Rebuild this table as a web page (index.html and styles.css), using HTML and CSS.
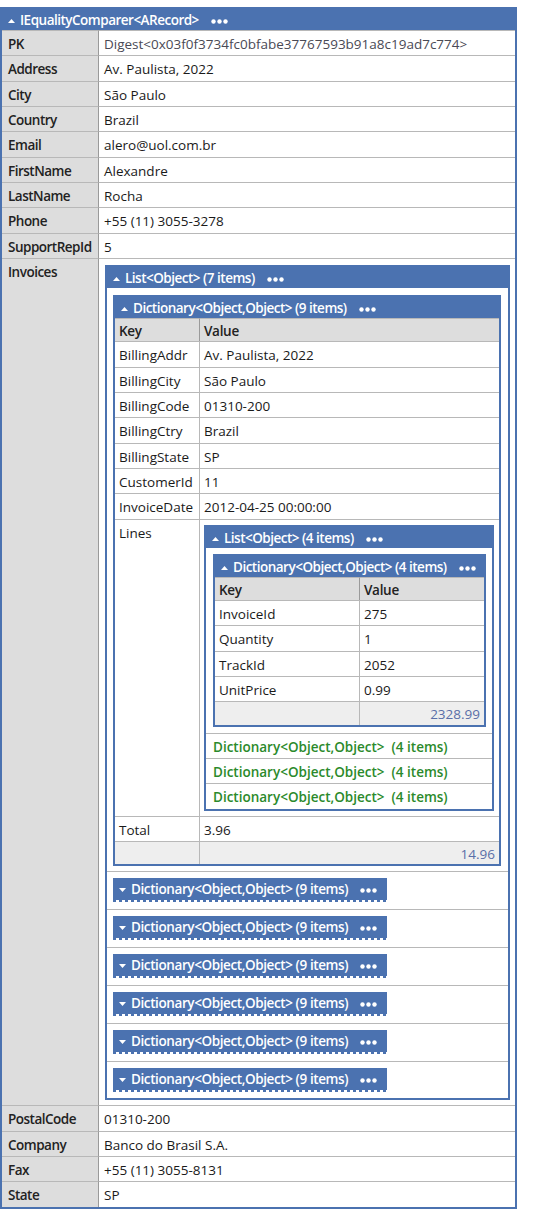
FILE: index.html
```html
<!DOCTYPE html>
<html>
<head>
<meta charset="utf-8">
<link rel="stylesheet" href="styles.css">
</head>
<body>
<div class="page">
<table class="obj outer">
  <colgroup><col class="c-outer-key"><col></colgroup>
  <thead>
    <tr><th colspan="2" class="hdr"><svg class="tri" viewBox="0 0 7 4"><polygon points="0,4 3.5,0 7,4"/></svg>IEqualityComparer&lt;ARecord&gt;<svg class="dots" viewBox="0 0 17 5"><circle cx="2.5" cy="2.5" r="2.2"/><circle cx="8.5" cy="2.5" r="2.2"/><circle cx="14.5" cy="2.5" r="2.2"/></svg></th></tr>
  </thead>
  <tbody>
    <tr><th class="k">PK</th><td class="v digest">Digest&lt;0x03f0f3734fc0bfabe37767593b91a8c19ad7c774&gt;</td></tr>
    <tr><th class="k">Address</th><td class="v">Av. Paulista, 2022</td></tr>
    <tr><th class="k">City</th><td class="v">São Paulo</td></tr>
    <tr><th class="k">Country</th><td class="v">Brazil</td></tr>
    <tr><th class="k">Email</th><td class="v">alero@uol.com.br</td></tr>
    <tr><th class="k">FirstName</th><td class="v">Alexandre</td></tr>
    <tr><th class="k">LastName</th><td class="v">Rocha</td></tr>
    <tr><th class="k">Phone</th><td class="v">+55 (11) 3055-3278</td></tr>
    <tr><th class="k">SupportRepId</th><td class="v">5</td></tr>
    <tr><th class="k">Invoices</th><td class="v nest-invoices">
      <table class="obj list7">
        <thead>
          <tr><th class="hdr"><svg class="tri" viewBox="0 0 7 4"><polygon points="0,4 3.5,0 7,4"/></svg>List&lt;Object&gt; (7 items)<svg class="dots" viewBox="0 0 17 5"><circle cx="2.5" cy="2.5" r="2.2"/><circle cx="8.5" cy="2.5" r="2.2"/><circle cx="14.5" cy="2.5" r="2.2"/></svg></th></tr>
        </thead>
        <tbody>
          <tr><td class="item first">
            <table class="obj dict9">
              <colgroup><col class="c-dict9-key"><col></colgroup>
              <thead>
                <tr><th colspan="2" class="hdr"><svg class="tri" viewBox="0 0 7 4"><polygon points="0,4 3.5,0 7,4"/></svg>Dictionary&lt;Object,Object&gt; (9 items)<svg class="dots" viewBox="0 0 17 5"><circle cx="2.5" cy="2.5" r="2.2"/><circle cx="8.5" cy="2.5" r="2.2"/><circle cx="14.5" cy="2.5" r="2.2"/></svg></th></tr>
                <tr><th class="colh ck">Key</th><th class="colh">Value</th></tr>
              </thead>
              <tbody>
                <tr><td class="dk">BillingAddr</td><td class="dv">Av. Paulista, 2022</td></tr>
                <tr><td class="dk">BillingCity</td><td class="dv">São Paulo</td></tr>
                <tr><td class="dk">BillingCode</td><td class="dv">01310-200</td></tr>
                <tr><td class="dk">BillingCtry</td><td class="dv">Brazil</td></tr>
                <tr><td class="dk">BillingState</td><td class="dv">SP</td></tr>
                <tr><td class="dk">CustomerId</td><td class="dv">11</td></tr>
                <tr><td class="dk">InvoiceDate</td><td class="dv">2012-04-25 00:00:00</td></tr>
                <tr><td class="dk">Lines</td><td class="dv nest-lines">
                  <table class="obj list4">
                    <thead>
                      <tr><th class="hdr"><svg class="tri" viewBox="0 0 7 4"><polygon points="0,4 3.5,0 7,4"/></svg>List&lt;Object&gt; (4 items)<svg class="dots" viewBox="0 0 17 5"><circle cx="2.5" cy="2.5" r="2.2"/><circle cx="8.5" cy="2.5" r="2.2"/><circle cx="14.5" cy="2.5" r="2.2"/></svg></th></tr>
                    </thead>
                    <tbody>
                      <tr><td class="item4 first">
                        <table class="obj dict4">
                          <colgroup><col class="c-dict4-key"><col></colgroup>
                          <thead>
                            <tr><th colspan="2" class="hdr"><svg class="tri" viewBox="0 0 7 4"><polygon points="0,4 3.5,0 7,4"/></svg>Dictionary&lt;Object,Object&gt; (4 items)<svg class="dots" viewBox="0 0 17 5"><circle cx="2.5" cy="2.5" r="2.2"/><circle cx="8.5" cy="2.5" r="2.2"/><circle cx="14.5" cy="2.5" r="2.2"/></svg></th></tr>
                            <tr><th class="colh ck">Key</th><th class="colh">Value</th></tr>
                          </thead>
                          <tbody>
                            <tr><td class="dk">InvoiceId</td><td class="dv">275</td></tr>
                            <tr><td class="dk">Quantity</td><td class="dv">1</td></tr>
                            <tr><td class="dk">TrackId</td><td class="dv">2052</td></tr>
                            <tr><td class="dk">UnitPrice</td><td class="dv">0.99</td></tr>
                            <tr><td class="sum ck"></td><td class="sum num">2328.99</td></tr>
                          </tbody>
                        </table>
                      </td></tr>
                      <tr><td class="green">Dictionary&lt;Object,Object&gt;&nbsp; (4 items)</td></tr>
                      <tr><td class="green">Dictionary&lt;Object,Object&gt;&nbsp; (4 items)</td></tr>
                      <tr><td class="green">Dictionary&lt;Object,Object&gt;&nbsp; (4 items)</td></tr>
                    </tbody>
                  </table>
                </td></tr>
                <tr><td class="dk">Total</td><td class="dv">3.96</td></tr>
                <tr><td class="sum ck"></td><td class="sum num">14.96</td></tr>
              </tbody>
            </table>
          </td></tr>
          <tr><td class="item"><div class="coll"><svg class="tri" viewBox="0 0 7 4"><polygon points="0,0 3.5,4 7,0"/></svg>Dictionary&lt;Object,Object&gt; (9 items)<svg class="dots" viewBox="0 0 17 5"><circle cx="2.5" cy="2.5" r="2.2"/><circle cx="8.5" cy="2.5" r="2.2"/><circle cx="14.5" cy="2.5" r="2.2"/></svg></div></td></tr>
          <tr><td class="item"><div class="coll"><svg class="tri" viewBox="0 0 7 4"><polygon points="0,0 3.5,4 7,0"/></svg>Dictionary&lt;Object,Object&gt; (9 items)<svg class="dots" viewBox="0 0 17 5"><circle cx="2.5" cy="2.5" r="2.2"/><circle cx="8.5" cy="2.5" r="2.2"/><circle cx="14.5" cy="2.5" r="2.2"/></svg></div></td></tr>
          <tr><td class="item"><div class="coll"><svg class="tri" viewBox="0 0 7 4"><polygon points="0,0 3.5,4 7,0"/></svg>Dictionary&lt;Object,Object&gt; (9 items)<svg class="dots" viewBox="0 0 17 5"><circle cx="2.5" cy="2.5" r="2.2"/><circle cx="8.5" cy="2.5" r="2.2"/><circle cx="14.5" cy="2.5" r="2.2"/></svg></div></td></tr>
          <tr><td class="item"><div class="coll"><svg class="tri" viewBox="0 0 7 4"><polygon points="0,0 3.5,4 7,0"/></svg>Dictionary&lt;Object,Object&gt; (9 items)<svg class="dots" viewBox="0 0 17 5"><circle cx="2.5" cy="2.5" r="2.2"/><circle cx="8.5" cy="2.5" r="2.2"/><circle cx="14.5" cy="2.5" r="2.2"/></svg></div></td></tr>
          <tr><td class="item"><div class="coll"><svg class="tri" viewBox="0 0 7 4"><polygon points="0,0 3.5,4 7,0"/></svg>Dictionary&lt;Object,Object&gt; (9 items)<svg class="dots" viewBox="0 0 17 5"><circle cx="2.5" cy="2.5" r="2.2"/><circle cx="8.5" cy="2.5" r="2.2"/><circle cx="14.5" cy="2.5" r="2.2"/></svg></div></td></tr>
          <tr><td class="item last"><div class="coll"><svg class="tri" viewBox="0 0 7 4"><polygon points="0,0 3.5,4 7,0"/></svg>Dictionary&lt;Object,Object&gt; (9 items)<svg class="dots" viewBox="0 0 17 5"><circle cx="2.5" cy="2.5" r="2.2"/><circle cx="8.5" cy="2.5" r="2.2"/><circle cx="14.5" cy="2.5" r="2.2"/></svg></div></td></tr>
        </tbody>
      </table>
    </td></tr>
    <tr><th class="k">PostalCode</th><td class="v">01310-200</td></tr>
    <tr><th class="k">Company</th><td class="v">Banco do Brasil S.A.</td></tr>
    <tr><th class="k">Fax</th><td class="v">+55 (11) 3055-8131</td></tr>
    <tr><th class="k">State</th><td class="v">SP</td></tr>
  </tbody>
</table>
</div>
</body>
</html>
```
FILE: styles.css
```css
html, body {
  margin: 0;
  padding: 0;
  background: #fff;
}
body {
  font-family: "Open Sans", "Noto Sans", "DejaVu Sans", sans-serif;
  font-size: 13.5px;
  color: #1a1a1a;
}
.page {
  padding-top: 7px;
}

table.obj {
  border-collapse: separate;
  border-spacing: 0;
  border: 2px solid #4b72b0;
  table-layout: fixed;
  box-sizing: border-box;
  margin: 0;
}
.outer { width: 517px; }
.c-outer-key { width: 97px; }
.list7 { width: 405px; }
.dict9 { width: 388px; }
.c-dict9-key { width: 85px; }
.list4 { width: 290px; }
.dict4 { width: 273px; }
.c-dict4-key { width: 145px; }

.hdr {
  background: #4b72b0;
  color: #fff;
  font-weight: 600;
  letter-spacing: -0.5px;
  text-align: left;
  white-space: nowrap;
  line-height: 18px;
  padding: 2px 6px 1px 6px;
}
.tri {
  width: 7px;
  height: 4px;
  fill: #fff;
  margin-right: 5px;
  vertical-align: 2px;
}
.dots {
  width: 17px;
  height: 5px;
  fill: #fff;
  margin-left: 12px;
  vertical-align: 1px;
}

.obj td, .obj th.k, .obj th.colh {
  border-top: 1px solid #b8b8b8;
  line-height: 18.33px;
  vertical-align: top;
  text-align: left;
}

th.k {
  background: #dddddd;
  font-weight: 600;
  letter-spacing: -0.5px;
  padding: 4px 5px 2px 6px;
  border-right: 1px solid #9a9a9a;
  color: #222;
  white-space: nowrap;
}
td.v {
  padding: 4px 5px 2px 5px;
}
td.digest {
  color: #4a4a55;
}

th.colh {
  background: #dddddd;
  font-weight: 600;
  letter-spacing: -0.3px;
  padding: 3px 4px 1px 4px;
  border-top: 0;
  color: #222;
}
.ck {
  border-right: 1px solid #9a9a9a;
}
td.dk {
  padding: 4px 4px 2px 4px;
  border-right: 1px solid #b8b8b8;
  white-space: nowrap;
}
td.dv {
  padding: 4px 4px 2px 4px;
}
td.sum {
  background: #eeeeee;
  padding: 3px 4px 1px 4px;
}
td.sum.ck {
  border-right: 1px solid #b8b8b8;
}
td.num {
  text-align: right;
  color: #5a6ea8;
}

td.nest-invoices {
  padding: 6px 5px 5px 6px;
}
td.nest-lines {
  padding: 5px 4px 5px 4px;
}

.list7 td.item {
  padding: 6px 6px 7px 6px;
}
.list7 td.item.first {
  padding: 7px 6px 5px 6px;
  border-top: 0;
}
.list7 td.item.last {
  padding-bottom: 6px;
}

.list4 td.item4 {
  padding: 6px 6px 6px 7px;
  border-top: 0;
}
.list4 td.green {
  padding: 4px 7px 2px 7px;
  color: #2b8a2b;
  font-weight: 600;
  white-space: nowrap;
}

.coll {
  display: inline-block;
  color: #fff;
  font-weight: 600;
  letter-spacing: -0.4px;
  white-space: nowrap;
  line-height: 18px;
  padding: 2px 10px 4px 6px;
  background:
    linear-gradient(#4b72b0, #4b72b0) top left / 100% calc(100% - 2px) no-repeat,
    repeating-linear-gradient(90deg, #4b72b0 0 3px, #ffffff 3px 6px) bottom left / 100% 2px no-repeat;
}
```
